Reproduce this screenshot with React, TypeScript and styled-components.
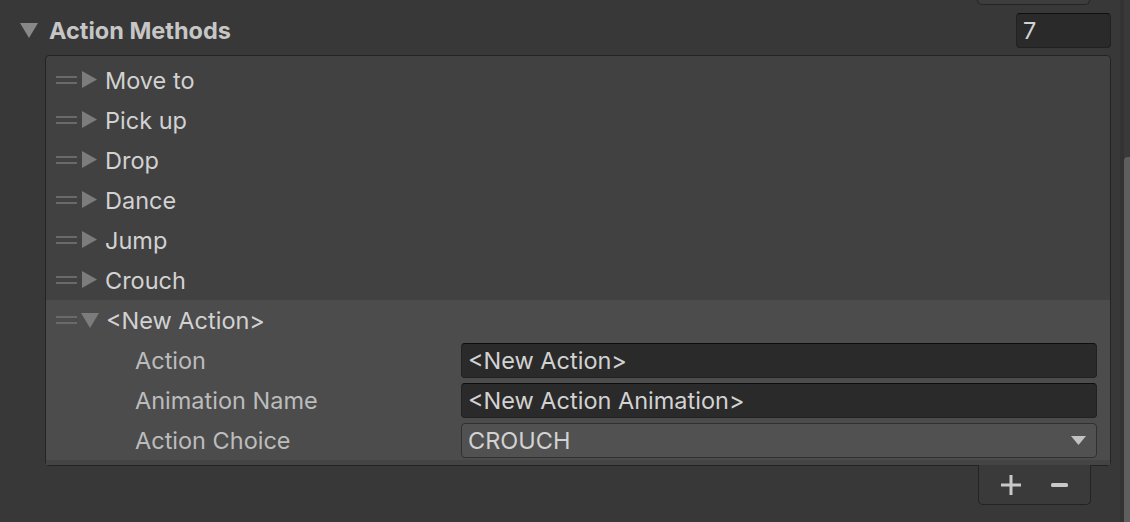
import React from "react";
import styled, { createGlobalStyle } from "styled-components";

const Global = createGlobalStyle`
  html, body { margin: 0; padding: 0; background: #383838; }
  body { font-family: Inter, "Noto Sans", "Liberation Sans", sans-serif; }
`;

const Page = styled.div`
  width: 1130px;
  height: 522px;
  overflow: hidden;
  background: #383838;
  display: flex;
`;

const Content = styled.div`
  width: 1120px;
  display: flex;
  flex-direction: column;
`;

const Gutter = styled.div`
  width: 4px;
  background: #333333;
`;

const Track = styled.div`
  width: 6px;
  display: flex;
  flex-direction: column;
  background: #393939;
`;

const Thumb = styled.div`
  margin-top: 157px;
  flex: 1;
  background: #5e5e5e;
  border-radius: 4px 0 0 0;
`;

const Stub = styled.div`
  margin-left: 977px;
  width: 111px;
  height: 4px;
  flex-shrink: 0;
  border: 1px solid #242424;
  border-top: none;
  border-radius: 0 0 5px 5px;
  background: #3d3d3d;
`;

const HeaderRow = styled.div`
  margin-top: 7px;
  height: 36px;
  flex-shrink: 0;
  display: flex;
  align-items: center;
  padding: 0 9px 0 20px;
`;

const HeaderTitle = styled.span`
  margin-left: 11px;
  font-size: 23.5px;
  font-weight: 700;
  color: #c6c6c6;
  flex: 1;
`;

const SizeField = styled.div`
  width: 95px;
  height: 35px;
  box-sizing: border-box;
  background: #2a2a2a;
  border: 1px solid #212121;
  border-top-color: #0e0e0e;
  border-radius: 4px;
  color: #d2d2d2;
  font-size: 23.5px;
  display: flex;
  align-items: center;
  padding-left: 6px;
`;

const ListBox = styled.div`
  margin: 7px 9px 0 45px;
  height: 411px;
  flex-shrink: 0;
  box-sizing: border-box;
  border: 1px solid #232323;
  border-radius: 4px;
  background: #414141;
  padding-top: 4px;
  display: flex;
  flex-direction: column;
`;

const ItemRow = styled.div`
  height: 40px;
  flex-shrink: 0;
  display: flex;
  align-items: center;
  padding-left: 10px;
`;

const ItemLabel = styled.span`
  margin-left: 7px;
  font-size: 23.5px;
  color: #d2d2d2;
`;

const Expanded = styled.div`
  background: #4c4c4c;
  display: flex;
  flex-direction: column;
  flex-shrink: 0;
`;

const FieldRow = styled.div`
  height: 40px;
  display: flex;
  align-items: center;
  padding-right: 13px;
`;

const FieldLabel = styled.span`
  width: 326px;
  padding-left: 89px;
  font-size: 23.5px;
  color: #bcbcbc;
`;

const TextInput = styled.div`
  flex: 1;
  height: 35px;
  box-sizing: border-box;
  background: #2a2a2a;
  border: 1px solid #212121;
  border-top-color: #0d0d0d;
  border-radius: 4px;
  color: #d2d2d2;
  font-size: 23.5px;
  display: flex;
  align-items: center;
  padding-left: 6px;
`;

const Dropdown = styled(TextInput)`
  background: #515151;
  border: 1px solid #303030;
  justify-content: space-between;
  padding-right: 10px;
`;

const BottomStrip = styled.div`
  height: 5px;
  flex-shrink: 0;
  background: #444444;
`;

const Footer = styled.div`
  margin-left: 978px;
  width: 113px;
  height: 40px;
  flex-shrink: 0;
  box-sizing: border-box;
  border: 1px solid #232323;
  border-top: none;
  border-radius: 0 0 5px 5px;
  background: #3a3a3a;
  display: flex;
  align-items: center;
  justify-content: center;
  gap: 30px;
  margin-top: -1px;
`;

const Handle = () => (
  <svg width="21" height="10" viewBox="0 0 21 10">
    <rect x="0" y="1" width="21" height="2" fill="#6a6a6a" />
    <rect x="0" y="7" width="21" height="2" fill="#6a6a6a" />
  </svg>
);

const Right = () => (
  <svg width="16" height="18" viewBox="0 0 16 18" style={{ marginLeft: 5 }}>
    <polygon points="0,0 15,8.5 0,17" fill="#7c7c7c" />
  </svg>
);

const Down = ({ color = "#7c7c7c", w = 18, h = 15 }: { color?: string; w?: number; h?: number }) => (
  <svg width={w} height={h} viewBox={`0 0 ${w} ${h}`}>
    <polygon points={`0,0 ${w},0 ${w / 2},${h}`} fill={color} />
  </svg>
);

const DownSlot = styled.span`
  margin-left: 4px;
  display: flex;
`;

const items = ["Move to", "Pick up", "Drop", "Dance", "Jump", "Crouch"];

export default function App() {
  return (
    <Page>
      <Global />
      <Content>
        <Stub />
        <HeaderRow>
          <Down color="#888888" />
          <HeaderTitle>Action Methods</HeaderTitle>
          <SizeField>7</SizeField>
        </HeaderRow>
        <ListBox>
          {items.map((t) => (
            <ItemRow key={t}>
              <Handle />
              <Right />
              <ItemLabel>{t}</ItemLabel>
            </ItemRow>
          ))}
          <Expanded>
            <ItemRow>
              <Handle />
              <DownSlot>
                <Down />
              </DownSlot>
              <ItemLabel>&lt;New Action&gt;</ItemLabel>
            </ItemRow>
            <FieldRow>
              <FieldLabel>Action</FieldLabel>
              <TextInput>&lt;New Action&gt;</TextInput>
            </FieldRow>
            <FieldRow>
              <FieldLabel>Animation Name</FieldLabel>
              <TextInput>&lt;New Action Animation&gt;</TextInput>
            </FieldRow>
            <FieldRow>
              <FieldLabel>Action Choice</FieldLabel>
              <Dropdown>
                <span>CROUCH</span>
                <Down color="#c2c2c2" w={15} h={9} />
              </Dropdown>
            </FieldRow>
          </Expanded>
          <BottomStrip />
        </ListBox>
        <Footer>
          <svg width="20" height="20" viewBox="0 0 20 20">
            <rect x="0" y="8.5" width="20" height="3" fill="#c8c8c8" />
            <rect x="8.5" y="0" width="3" height="20" fill="#c8c8c8" />
          </svg>
          <svg width="17" height="4" viewBox="0 0 17 4">
            <rect x="0" y="0" width="17" height="4" rx="1.5" fill="#c8c8c8" />
          </svg>
        </Footer>
      </Content>
      <Gutter />
      <Track>
        <Thumb />
      </Track>
    </Page>
  );
}
